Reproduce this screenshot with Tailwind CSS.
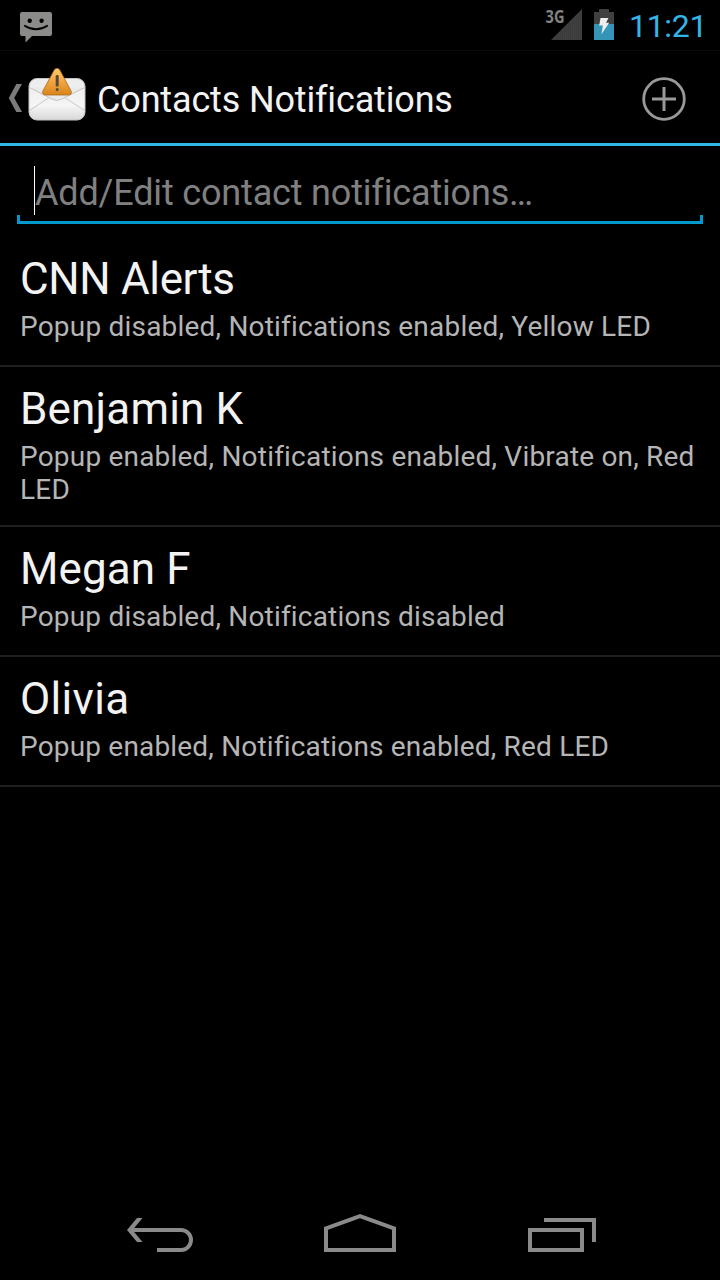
<!DOCTYPE html>
<html lang="en">
<head>
<meta charset="utf-8">
<title>Contacts Notifications</title>
<script src="https://cdn.jsdelivr.net/npm/@tailwindcss/browser@4"></script>
</head>
<body class="bg-black">
<div class="flex h-[1280px] w-[720px] flex-col overflow-hidden bg-black font-['Roboto',sans-serif] text-[#f3f3f3]">
  <!-- Status bar -->
  <div class="flex h-[51px] shrink-0 items-start border-b border-[#0b0b0b] pl-5">
    <svg class="mt-3 h-[31px] w-8" viewBox="0 0 32 31"><path fill="#8b8b89" d="M2 0H30Q32 0 32 2V22Q32 24 30 24H12L5.5 30.5V24H2Q0 24 0 22V2Q0 0 2 0Z"/><circle cx="9.7" cy="8.7" r="2.2"/><circle cx="21.6" cy="8.7" r="2.2"/><path d="M4.2 13.5Q16 21 27.8 13.5" fill="none" stroke="#000" stroke-width="2"/></svg>
    <svg class="ml-[493px] h-[42px] w-[38px]" viewBox="0 0 38 42"><defs><pattern id="mesh" width="2" height="2" patternUnits="userSpaceOnUse"><rect width="2" height="2" fill="#3c3c3c"/><rect width="1" height="1" fill="#444"/></pattern></defs><path fill="url(#mesh)" d="M37 9V40H6Z"/><text x="0.5" y="23" font-family="Open Sans" font-weight="700" font-size="17.5" fill="#828282" textLength="19" lengthAdjust="spacingAndGlyphs">3G</text></svg>
    <svg class="ml-[11px] mt-[9px] h-[31px] w-5" viewBox="0 0 20 31"><path fill="#404040" d="M5 0H15V3H20V15H0V3H5Z"/><path fill="#3595b8" d="M0 15H20V31H0Z"/><path fill="#eee" d="M6.5 9H14.5L12 13.8H15.2L7.5 25.2L8.8 16.5H5.2Z"/></svg>
    <div class="ml-[15px] mt-[7px] text-[32px] leading-[38px] tracking-[-0.3px] text-[#33b5e5]">11:21</div>
  </div>

  <!-- Action bar -->
  <div class="flex h-[95px] shrink-0 items-center border-b-[3px] border-[#33b5e5] pl-2">
    <svg class="mt-[2px] h-7 w-[14px]" viewBox="0 0 14 28"><path fill="#7b7b7b" d="M8.3 0H14L6.2 14L14 28H8.3L.8 14Z"/></svg>
    <svg class="ml-[6px] mb-[4px] h-[54px] w-[58px]" viewBox="0 0 58 54">
      <defs>
        <linearGradient id="paper" x2="0" y2="1"><stop stop-color="#ececec"/><stop offset=".65" stop-color="#f5f5f5"/><stop offset="1" stop-color="#d8d8d8"/></linearGradient>
        <linearGradient id="warn" x2="0" y2="1"><stop stop-color="#ffcb6a"/><stop offset=".5" stop-color="#f0a542"/><stop offset="1" stop-color="#d8851b"/></linearGradient>
      </defs>
      <rect x="1" y="10.5" width="56" height="41.5" rx="8" fill="url(#paper)" stroke="#c3c3c3"/>
      <path d="M1.5 42.5L22 29M56.5 42.5L36 29" stroke="#c8c8c8" fill="none"/>
      <path d="M1.5 19.5L24 31Q29 34 34 31L56.5 19.5" stroke="#c4c4c4" fill="#eaeaea"/>
      <path d="M26.2 2Q29 -1.5 31.8 2L43.2 23.2Q44 27 40.5 27H17.5Q14 27 14.8 23.2Z" fill="url(#warn)" stroke="#a86a18" stroke-width=".8"/>
      <rect x="27.7" y="7" width="3" height="11.5" rx="1.3" fill="#55493a"/><circle cx="29.2" cy="21.6" r="1.5" fill="#55493a"/>
    </svg>
    <div class="ml-[11px] mt-[6px] text-[36px] leading-[42px] tracking-[-0.16px]">Contacts Notifications</div>
    <svg class="ml-auto mr-[34px] mt-[3px] h-11 w-11" viewBox="0 0 44 44" fill="none" stroke="#999"><circle cx="22" cy="22" r="20.3" stroke-width="2.8"/><path d="M10 22H34M22 10V34" stroke-width="3"/></svg>
  </div>

  <!-- Contact field -->
  <div class="relative mx-[17px] mt-5 h-[58px] shrink-0 border-b-[3px] border-[#0099cc]">
    <div class="absolute -bottom-[3px] left-0 h-[9px] w-[3px] bg-[#0099cc]"></div>
    <div class="absolute -bottom-[3px] right-0 h-[9px] w-[3px] bg-[#0099cc]"></div>
    <div class="ml-[17px] flex h-[49px] items-center border-l border-white">
      <div class="mt-[5px] text-[36px] leading-[42px] tracking-[-0.17px] text-[#808080]">Add/Edit contact notifications…</div>
    </div>
  </div>

  <!-- Contact rules -->
  <div class="mt-[13px] flex flex-col">
    <div class="h-[130px] border-b-2 border-[#202020] px-5 pt-4">
      <div class="text-[44px] leading-[52px] tracking-[-0.35px]">CNN Alerts</div>
      <div class="mt-[5px] whitespace-nowrap text-[28px] leading-[33px] tracking-[0.2px] text-[#b5b5b5]">Popup disabled, Notifications enabled, Yellow LED</div>
    </div>
    <div class="h-[160px] border-b-2 border-[#202020] px-5 pt-4">
      <div class="text-[44px] leading-[52px] tracking-[0.18px]">Benjamin K</div>
      <div class="mt-[5px] whitespace-nowrap text-[28px] leading-[33px] tracking-[0.2px] text-[#b5b5b5]">Popup enabled, Notifications enabled, Vibrate on, Red<br>LED</div>
    </div>
    <div class="h-[130px] border-b-2 border-[#202020] px-5 pt-4">
      <div class="text-[44px] leading-[52px] tracking-[0.1px]">Megan F</div>
      <div class="mt-[5px] whitespace-nowrap text-[28px] leading-[33px] tracking-[0.19px] text-[#b5b5b5]">Popup disabled, Notifications disabled</div>
    </div>
    <div class="h-[130px] border-b-2 border-[#202020] px-5 pt-4">
      <div class="text-[44px] leading-[52px] tracking-[0.3px]">Olivia</div>
      <div class="mt-[5px] whitespace-nowrap text-[28px] leading-[33px] tracking-[0.18px] text-[#b5b5b5]">Popup enabled, Notifications enabled, Red LED</div>
    </div>
  </div>

  <!-- Navigation bar -->
  <div class="mt-auto flex h-24 shrink-0 items-start pl-[110px] pt-4">
    <svg class="h-[70px] w-[100px]" viewBox="0 0 100 70"><path fill="none" stroke="#8a8a8a" stroke-width="4" d="M20 30H71A10 10 0 0 1 71 50H47"/><path fill="#8a8a8a" d="M27 18H32.5L22.5 30L32.5 42H27L17 30Z"/></svg>
    <svg class="ml-[100px] h-[70px] w-[100px]" viewBox="0 0 100 70" fill="none" stroke="#8a8a8a" stroke-width="4"><path d="M16 50V28.4L50 16.2L84 28.4V50Z"/></svg>
    <svg class="ml-[100px] h-[70px] w-[100px]" viewBox="0 0 100 70" fill="none" stroke="#8a8a8a" stroke-width="4"><path d="M20 30H72V50H20ZM34 20H84V42"/></svg>
  </div>
</div>
</body>
</html>
